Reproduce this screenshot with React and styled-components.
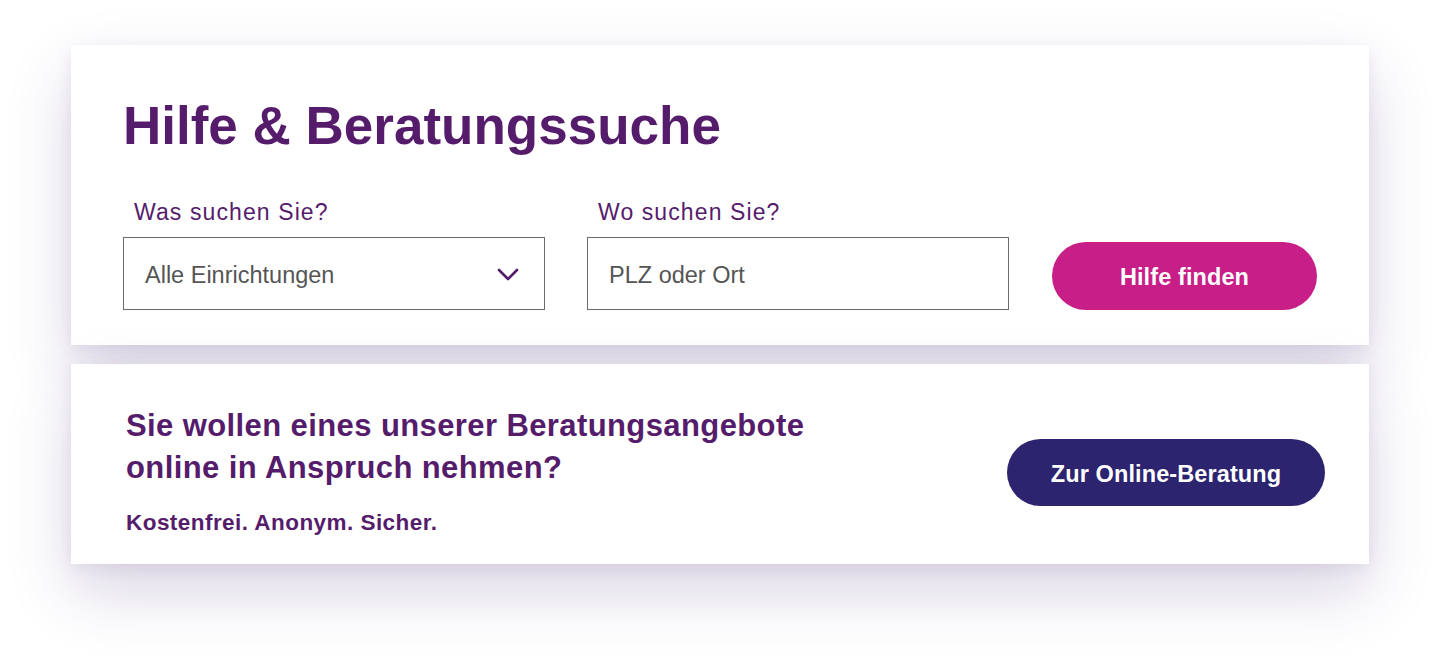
import React from "react";
import styled, { createGlobalStyle } from "styled-components";

const Global = createGlobalStyle`
  html, body { margin: 0; padding: 0; background: #ffffff; }
  body { font-family: "Liberation Sans", Arial, sans-serif; }
  * { box-sizing: border-box; }
`;

const Page = styled.div`
  width: 1440px;
  height: 662px;
  padding: 45px 71px 0 71px;
  display: flex;
  flex-direction: column;
  gap: 19px;
  overflow: hidden;
`;

const Card = styled.section`
  background: #ffffff;
  height: ${(p) => p.$h}px;
  box-shadow: 0 28px 60px rgba(72, 44, 122, 0.2), 0 4px 14px rgba(72, 44, 122, 0.08);
`;

const SearchCard = styled(Card)`
  padding: 54px 52px 0 52px;
`;

const Title = styled.h1`
  margin: 0;
  color: #561c6c;
  font-size: 53px;
  font-weight: 700;
  line-height: 53px;
`;

const FormRow = styled.div`
  display: flex;
  align-items: flex-end;
  margin-top: 47px;
`;

const Field = styled.div`
  display: flex;
  flex-direction: column;
  width: 422px;
  margin-right: ${(p) => p.$mr}px;
`;

const Label = styled.label`
  color: #561c6c;
  font-size: 23px;
  line-height: 26px;
  letter-spacing: 1.1px;
  padding-left: 11px;
  margin-bottom: 12px;
`;

const Box = styled.div`
  height: 73px;
  border: 1px solid #6b6b6b;
  display: flex;
  align-items: center;
  justify-content: space-between;
  padding: 3px 25px 0 21px;
  font-size: 23.5px;
  color: #555555;
`;

const PillButton = styled.button`
  width: ${(p) => p.$w}px;
  height: ${(p) => p.$h}px;
  margin-top: ${(p) => p.$mt || 0}px;
  flex-shrink: 0;
  border: none;
  border-radius: 34px;
  background: ${(p) => p.$bg};
  color: #ffffff;
  font-family: "Liberation Sans", Arial, sans-serif;
  font-weight: 700;
  font-size: 23.5px;
  letter-spacing: 0.1px;
  cursor: pointer;
  padding: 3px 0 0 0;
  display: flex;
  align-items: center;
  justify-content: center;
`;

const OnlineCard = styled(Card)`
  display: flex;
  align-items: flex-start;
  justify-content: space-between;
  padding: 41px 44px 0 55px;
`;

const TextBlock = styled.div`
  display: flex;
  flex-direction: column;
`;

const Question = styled.h2`
  margin: 0;
  color: #561c6c;
  font-size: 31px;
  font-weight: 700;
  line-height: 42px;
  letter-spacing: 0.4px;
`;

const Sub = styled.p`
  margin: 21px 0 0 0;
  color: #561c6c;
  font-size: 22.5px;
  font-weight: 700;
  line-height: 26px;
  letter-spacing: 0.45px;
`;

const Chevron = () => (
  <svg width="22" height="14" viewBox="0 0 22 14" fill="none">
    <path d="M2 2 L11 11 L20 2" stroke="#561c6c" strokeWidth="2.6" strokeLinecap="round" strokeLinejoin="round" />
  </svg>
);

export default function App() {
  return (
    <>
      <Global />
      <Page>
        <SearchCard $h={300}>
          <Title>Hilfe &amp; Beratungssuche</Title>
          <FormRow>
            <Field $mr={42}>
              <Label>Was suchen Sie?</Label>
              <Box>
                <span>Alle Einrichtungen</span>
                <Chevron />
              </Box>
            </Field>
            <Field $mr={43}>
              <Label>Wo suchen Sie?</Label>
              <Box>
                <span>PLZ oder Ort</span>
              </Box>
            </Field>
            <PillButton $w={265} $h={68} $bg="#c71e87">Hilfe finden</PillButton>
          </FormRow>
        </SearchCard>
        <OnlineCard $h={200}>
          <TextBlock>
            <Question>
              Sie wollen eines unserer Beratungsangebote
              <br />
              online in Anspruch nehmen?
            </Question>
            <Sub>Kostenfrei. Anonym. Sicher.</Sub>
          </TextBlock>
          <PillButton $w={318} $h={67} $mt={34} $bg="#2d2470">
            Zur Online-Beratung
          </PillButton>
        </OnlineCard>
      </Page>
    </>
  );
}
